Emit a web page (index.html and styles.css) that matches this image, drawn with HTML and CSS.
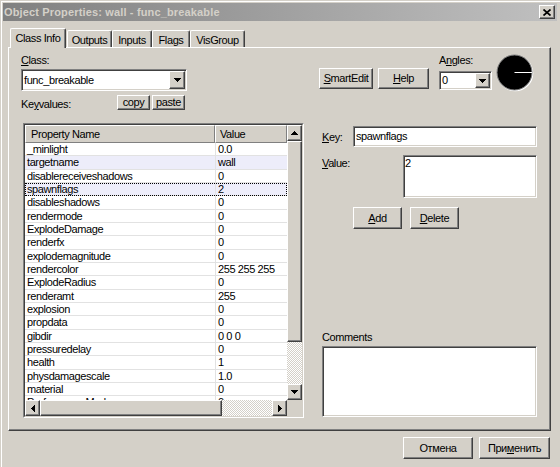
FILE: index.html
```html
<!DOCTYPE html>
<html lang="en">
<head>
  <meta charset="UTF-8" />
  <title>Object Properties: wall - func_breakable</title>
  <link rel="stylesheet" href="styles.css">
</head>
<body>

  <div class="window">

    <!-- Title bar -->
    <div class="titlebar">
      <span class="caption">Object Properties: wall - func_breakable</span>
      <span class="close-btn raised">
        <svg width="8" height="7" viewBox="0 0 8 7"><path d="M0.5 0.5L7.5 6.5M7.5 0.5L0.5 6.5" stroke="#000" stroke-width="1.7"/></svg>
      </span>
    </div>

    <!-- Tabs -->
    <div class="tabs">
      <div class="tab active">Class Info</div>
      <div class="tab tab-outputs">Outputs</div>
      <div class="tab tab-inputs">Inputs</div>
      <div class="tab tab-flags">Flags</div>
      <div class="tab tab-visgroup">VisGroup</div>
    </div>

    <div class="panel">

      <div class="top-row">
        <div class="class-group">
          <div class="field-label"><u>C</u>lass:</div>
          <div class="combo class-combo sunken">
            <span class="combo-text">func_breakable</span>
            <span class="drop-btn raised">
              <svg width="7" height="4" viewBox="0 0 7 4" shape-rendering="crispEdges"><polygon points="0,0 7,0 3.5,4" fill="#000"/></svg>
            </span>
          </div>
          <div class="kv-row">
            <span class="kv-label">Ke<u>y</u>values:</span>
            <span class="small-btn raised">copy</span>
            <span class="small-btn raised">paste</span>
          </div>
        </div>

        <div class="action-btns">
          <span class="btn raised btn-smartedit"><u>S</u>martEdit</span>
          <span class="btn raised btn-help"><u>H</u>elp</span>
        </div>

        <div class="angles">
          <div class="field-label">A<u>n</u>gles:</div>
          <div class="combo angles-combo sunken">
            <span class="combo-text">0</span>
            <span class="drop-btn raised">
              <svg width="7" height="4" viewBox="0 0 7 4" shape-rendering="crispEdges"><polygon points="0,0 7,0 3.5,4" fill="#000"/></svg>
            </span>
          </div>
        </div>

        <svg class="dial" width="38" height="38" viewBox="0 0 38 38">
          <circle cx="19.3" cy="19.3" r="18" fill="#fff"/>
          <circle cx="18.5" cy="18.5" r="17.5" fill="#000" stroke="#808080"/>
          <line x1="18.5" y1="18.5" x2="36" y2="18.5" stroke="#fff"/>
        </svg>
      </div>

      <div class="main-row">

        <!-- Keyvalue list -->
        <div class="list">
          <div class="list-inner">
            <div class="viewport">
              <div class="list-head">
                <div class="head-cell head-name">Property Name</div>
                <div class="head-cell head-val">Value</div>
              </div>
              <div class="row"><span class="name">_minlight</span><span class="val">0.0</span></div>
              <div class="row changed"><span class="name">targetname</span><span class="val">wall</span></div>
              <div class="row"><span class="name">disablereceiveshadows</span><span class="val">0</span></div>
              <div class="row changed focus"><span class="name">spawnflags</span><span class="val">2</span></div>
              <div class="row"><span class="name">disableshadows</span><span class="val">0</span></div>
              <div class="row"><span class="name">rendermode</span><span class="val">0</span></div>
              <div class="row"><span class="name">ExplodeDamage</span><span class="val">0</span></div>
              <div class="row"><span class="name">renderfx</span><span class="val">0</span></div>
              <div class="row"><span class="name">explodemagnitude</span><span class="val">0</span></div>
              <div class="row"><span class="name">rendercolor</span><span class="val">255 255 255</span></div>
              <div class="row"><span class="name">ExplodeRadius</span><span class="val">0</span></div>
              <div class="row"><span class="name">renderamt</span><span class="val">255</span></div>
              <div class="row"><span class="name">explosion</span><span class="val">0</span></div>
              <div class="row"><span class="name">propdata</span><span class="val">0</span></div>
              <div class="row"><span class="name">gibdir</span><span class="val">0 0 0</span></div>
              <div class="row"><span class="name">pressuredelay</span><span class="val">0</span></div>
              <div class="row"><span class="name">health</span><span class="val">1</span></div>
              <div class="row"><span class="name">physdamagescale</span><span class="val">1.0</span></div>
              <div class="row"><span class="name">material</span><span class="val">0</span></div>
              <div class="row"><span class="name">PerformanceMode</span><span class="val">0</span></div>
            </div>

            <div class="vscroll">
              <span class="sb-btn raised">
                <svg width="7" height="4" viewBox="0 0 7 4" shape-rendering="crispEdges"><polygon points="3.5,0 7,4 0,4" fill="#000"/></svg>
              </span>
              <span class="v-thumb raised"></span>
              <span class="track"></span>
              <span class="sb-btn raised">
                <svg width="7" height="4" viewBox="0 0 7 4" shape-rendering="crispEdges"><polygon points="0,0 7,0 3.5,4" fill="#000"/></svg>
              </span>
            </div>

            <div class="hscroll">
              <span class="sb-btn raised">
                <svg width="4" height="7" viewBox="0 0 4 7" shape-rendering="crispEdges"><polygon points="4,0 4,7 0,3.5" fill="#000"/></svg>
              </span>
              <span class="h-thumb raised"></span>
              <span class="track"></span>
              <span class="sb-btn raised">
                <svg width="4" height="7" viewBox="0 0 4 7" shape-rendering="crispEdges"><polygon points="0,0 4,3.5 0,7" fill="#000"/></svg>
              </span>
            </div>

            <div class="corner"></div>
          </div>
        </div>

        <!-- Key / value editor -->
        <div class="side">
          <div class="key-row">
            <span class="side-label key-label"><u>K</u>ey:</span>
            <div class="key-input sunken">spawnflags</div>
          </div>
          <div class="value-row">
            <span class="side-label value-label"><u>V</u>alue:</span>
            <div class="value-box sunken">2</div>
          </div>
          <div class="add-row">
            <span class="btn raised btn-add"><u>A</u>dd</span>
            <span class="btn raised btn-delete"><u>D</u>elete</span>
          </div>
          <div class="comments">
            <div class="field-label">Comments</div>
            <div class="comments-box sunken"></div>
          </div>
        </div>

      </div>
    </div>

    <div class="footer">
      <span class="btn raised btn-cancel">Отмена</span>
      <span class="btn raised btn-apply">При<u>м</u>енить</span>
    </div>

  </div>

</body>
</html>
```

FILE: styles.css
```css
body {
  margin: 0;
  background-color: #d4d0c8;
  font-family: "Liberation Sans", Arial, sans-serif;
  font-size: 11px;
  letter-spacing: -0.4px;
  color: #000;
}

.window {
  width: 560px;
  height: 467px;
  box-sizing: border-box;
  padding: 3px 0 0 3px;
  box-shadow: inset 1px 1px #d4d0c8, inset 2px 2px #fff;
  overflow: hidden;
}

/* classic 3d borders */
.raised {
  box-sizing: border-box;
  background-color: #d4d0c8;
  border: 1px solid;
  border-color: #fff #404040 #404040 #fff;
  box-shadow: inset -1px -1px #808080;
}

.sunken {
  box-sizing: border-box;
  background-color: #fff;
  border: 1px solid;
  border-color: #808080 #fff #fff #808080;
  box-shadow: inset 1px 1px #404040, inset -1px -1px #d4d0c8;
  padding: 1px;
}

/* title bar */
.titlebar {
  display: flex;
  align-items: center;
  justify-content: space-between;
  width: 554px;
  height: 18px;
  box-sizing: border-box;
  padding: 0 2px 0 1px;
  background: linear-gradient(to right, #808080, #c0c0c0);
}

.caption {
  color: #d4d0c8;
  font-weight: bold;
  letter-spacing: 0.15px;
}

.close-btn {
  display: flex;
  align-items: center;
  justify-content: center;
  width: 16px;
  height: 14px;
}

/* tabs */
.tabs {
  position: relative;
  z-index: 1;
  display: flex;
  align-items: flex-end;
  height: 19px;
  margin: 7px 0 0 7px;
}

.tab {
  height: 17px;
  box-sizing: border-box;
  border: 1px solid;
  border-bottom: none;
  border-color: #fff #404040 #fff #fff;
  border-radius: 2px 2px 0 0;
  box-shadow: inset -1px 0 #808080;
  padding-top: 3px;
  line-height: 13px;
  text-align: center;
  background-color: #d4d0c8;
}

.tab.active {
  width: 56px;
  height: 20px;
  margin-bottom: -1px;
}

.tab-outputs { width: 45px; margin-left: 1px; }
.tab-inputs { width: 40px; }
.tab-flags { width: 38px; }
.tab-visgroup { width: 55px; }

.panel {
  width: 543px;
  height: 384px;
  box-sizing: border-box;
  margin-left: 5px;
  border: 1px solid;
  border-color: #fff #404040 #404040 #fff;
  box-shadow: inset -1px -1px #808080;
  padding: 6px 0 0 12px;
}

.field-label {
  height: 13px;
  line-height: 13px;
}

/* top row */
.top-row {
  display: flex;
  align-items: flex-start;
}

.class-group {
  width: 166px;
  flex: none;
}

.combo {
  display: flex;
}

.combo-text {
  flex: 1;
  padding-left: 1px;
}

.class-combo {
  height: 22px;
  margin-top: 2px;
  line-height: 18px;
}

.class-combo .drop-btn {
  width: 16px;
  height: 18px;
}

.drop-btn {
  display: flex;
  align-items: center;
  justify-content: center;
}

.kv-row {
  display: flex;
  height: 15px;
  margin-top: 4px;
}

.kv-label {
  flex: none;
  width: 96px;
  padding-top: 3px;
  line-height: 13px;
}

.small-btn {
  flex: none;
  width: 33px;
  height: 15px;
  line-height: 13px;
  text-align: center;
  margin-right: 2px;
}

.btn {
  display: inline-block;
  height: 21px;
  line-height: 19px;
  text-align: center;
}

.action-btns {
  display: flex;
  gap: 5px;
  margin: 14px 0 0 132px;
}

.btn-smartedit { width: 54px; }
.btn-help { width: 51px; }

.angles {
  width: 53px;
  margin-left: 10px;
}

.angles-combo {
  height: 19px;
  margin-top: 4px;
  line-height: 15px;
}

.angles-combo .drop-btn {
  width: 15px;
  height: 15px;
}

.dial {
  display: block;
  margin-left: 4px;
}

/* list + editor */
.main-row {
  display: flex;
  margin-top: 13px;
}

.list {
  width: 281px;
  height: 295px;
  box-sizing: border-box;
  margin-left: 2px;
  border: 1px solid;
  border-color: #808080 #fff #fff #808080;
}

.list-inner {
  display: grid;
  grid-template-columns: 1fr 15px;
  grid-template-rows: 1fr 16px;
  height: 100%;
  box-sizing: border-box;
  border: 1px solid;
  border-color: #404040 #d4d0c8 #d4d0c8 #404040;
}

.viewport {
  overflow: hidden;
  background-color: #fff;
}

.list-head {
  display: flex;
  height: 18px;
}

.head-cell {
  height: 18px;
  box-sizing: border-box;
  background-color: #d4d0c8;
  border: 1px solid;
  border-color: #fff #808080 #808080 #fff;
  padding: 1px 0 0 5px;
  line-height: 14px;
}

.head-name { width: 190px; }
.head-val { flex: 1; padding-left: 4px; }

.row {
  display: flex;
  height: 13.333px;
  box-sizing: border-box;
  border-bottom: 1px solid #e2e2e2;
  line-height: 12px;
  white-space: nowrap;
}

.row.changed {
  background-color: #ededfa;
}

.row.focus {
  outline: 1px dotted #000;
  outline-offset: -1px;
}

.name {
  width: 190px;
  box-sizing: border-box;
  padding-left: 2px;
}

.val {
  flex: 1;
  border-left: 1px solid #e2e2e2;
  padding-left: 2px;
}

.vscroll {
  display: flex;
  flex-direction: column;
}

.hscroll {
  display: flex;
}

.sb-btn {
  display: flex;
  align-items: center;
  justify-content: center;
  flex: none;
  width: 15px;
  height: 16px;
}

.v-thumb {
  height: 201px;
  flex: none;
}

.h-thumb {
  width: 182px;
  flex: none;
}

.track {
  flex: 1;
  background: repeating-conic-gradient(#fff 0 25%, #d4d0c8 0 50%) 0 0 / 2px 2px;
}

.corner {
  background-color: #d4d0c8;
}

.side {
  display: flex;
  flex-direction: column;
  width: 215px;
  height: 295px;
  box-sizing: border-box;
  margin-left: 18px;
  padding-top: 3px;
}

.key-row {
  display: flex;
  align-items: center;
}

.key-label {
  width: 31px;
}

.key-input {
  width: 184px;
  height: 21px;
  padding-left: 2px;
  line-height: 17px;
}

.value-row {
  display: flex;
  margin-top: 8px;
}

.value-label {
  width: 81px;
  padding-top: 2px;
  line-height: 13px;
}

.value-box {
  width: 134px;
  height: 43px;
  line-height: 13px;
}

.add-row {
  display: flex;
  gap: 8px;
  margin-top: 9px;
  padding-left: 31px;
}

.btn-add, .btn-delete {
  width: 49px;
  height: 22px;
  line-height: 20px;
}

.comments {
  margin-top: auto;
  margin-bottom: 1px;
}

.comments-box {
  height: 71px;
  margin-top: 2px;
}

/* dialog buttons */
.footer {
  display: flex;
  justify-content: flex-end;
  gap: 6px;
  margin-top: 6px;
  padding-right: 10px;
}

.btn-cancel, .btn-apply {
  height: 22px;
  line-height: 20px;
}

.btn-cancel { width: 70px; }
.btn-apply { width: 71px; }
```
